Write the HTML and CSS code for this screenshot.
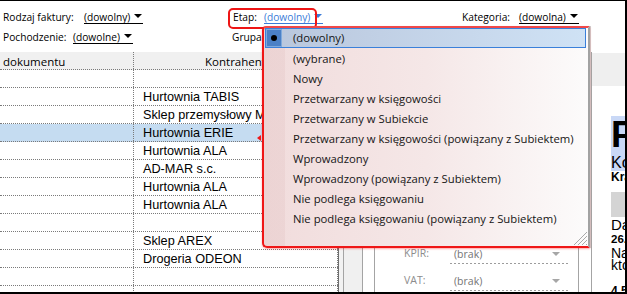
FILE: index.html
```html
<!DOCTYPE html>
<html lang="pl">
<head>
<meta charset="utf-8">
<title>Faktury</title>
<link rel="stylesheet" href="styles.css">
</head>
<body>
<div class="frame">
  <div class="filters">
    <div class="filter"><span class="lbl w-rodzaj">Rodzaj faktury:</span><span class="dd">(dowolny)<i class="tri"></i></span></div>
    <div class="filter etap"><span class="lbl w-etap">Etap:</span><span class="dd blue">(dowolny)<i class="tri"></i></span></div>
    <div class="filter"><span class="lbl w-kat">Kategoria:</span><span class="dd">(dowolna)<i class="tri"></i></span></div>
    <div class="filter"><span class="lbl w-poch">Pochodzenie:</span><span class="dd">(dowolne)<i class="tri"></i></span></div>
    <div class="filter grupa"><span class="lbl w-grupa">Grupa:</span></div>
  </div>
  <div class="main">
    <div class="grid">
      <div class="row head"><div class="c1">dokumentu</div><div class="c2 center">Kontrahent</div></div>
      <div class="row data"><div class="c1"></div><div class="c2"></div></div>
      <div class="row data"><div class="c1"></div><div class="c2">Hurtownia TABIS</div></div>
      <div class="row data"><div class="c1"></div><div class="c2">Sklep przemysłowy MEGA</div></div>
      <div class="row data sel"><div class="c1"></div><div class="c2">Hurtownia ERIE</div></div>
      <div class="row data"><div class="c1"></div><div class="c2">Hurtownia ALA</div></div>
      <div class="row data"><div class="c1"></div><div class="c2">AD-MAR s.c.</div></div>
      <div class="row data"><div class="c1"></div><div class="c2">Hurtownia ALA</div></div>
      <div class="row data"><div class="c1"></div><div class="c2">Hurtownia ALA</div></div>
      <div class="row data"><div class="c1"></div><div class="c2"></div></div>
      <div class="row data"><div class="c1"></div><div class="c2">Sklep AREX</div></div>
      <div class="row data"><div class="c1"></div><div class="c2">Drogeria ODEON</div></div>
      <div class="row data"><div class="c1"></div><div class="c2"></div></div>
      <div class="row data"><div class="c1"></div><div class="c2"></div></div>
    </div>
    <div class="s1"></div>
    <div class="s2"></div>
    <div class="s3"></div>
    <div class="form">
      <div class="frow"><span class="flbl">KPIR:</span><span class="fval">(brak)<i class="ftri"></i></span></div>
      <div class="frow"><span class="flbl">VAT:</span><span class="fval">(brak)<i class="ftri"></i></span></div>
    </div>
    <div class="s4"></div>
    <div class="right">
      <div class="rhead"></div>
      <div class="rbody">
        <div class="blk">
          <div class="big">FZ</div>
          <div class="ko">Kontrahent</div>
        </div>
        <div class="kr">Kraków</div>
        <div class="gbox"></div>
        <div class="da">Data</div>
        <div class="b26">26.05</div>
        <div class="na">Należność</div>
        <div class="kt">kto</div>
        <div class="four">4 500</div>
      </div>
    </div>
  </div>
  <div class="popup">
    <div class="mi sel"><span class="chk"></span>(dowolny)</div>
    <div class="mi">(wybrane)</div>
    <div class="mi">Nowy</div>
    <div class="mi">Przetwarzany w księgowości</div>
    <div class="mi">Przetwarzany w Subiekcie</div>
    <div class="mi">Przetwarzany w księgowości (powiązany z Subiektem)</div>
    <div class="mi">Wprowadzony</div>
    <div class="mi">Wprowadzony (powiązany z Subiektem)</div>
    <div class="mi">Nie podlega księgowaniu</div>
    <div class="mi">Nie podlega księgowaniu (powiązany z Subiektem)</div>
    <svg class="grip" width="14" height="14" viewBox="0 0 14 14">
      <path d="M14 1 L1 14 M14 5 L5 14 M14 9 L9 14 M14 13 L13 14" stroke="#a9a9a9" stroke-width="1" fill="none"/>
    </svg>
  </div>
</div>
</body>
</html>
```
FILE: styles.css
```css
html, body {
  margin: 0;
  padding: 0;
  background: #fff;
}
body {
  width: 627px;
  height: 294px;
  overflow: hidden;
}
.frame {
  position: relative;
  box-sizing: border-box;
  width: 627px;
  height: 294px;
  border-top: 1px solid #000;
  border-right: 2px solid #000;
  border-bottom: 2px solid #000;
  display: flex;
  flex-direction: column;
  font-family: "Open Sans", "Noto Sans", sans-serif;
  color: #000;
  overflow: hidden;
}

/* filters */
.filters {
  height: 51px;
  flex: none;
  box-sizing: border-box;
  padding: 6px 0 0 3px;
  display: grid;
  grid-template-columns: 230px 229px 1fr;
  grid-auto-rows: 20px;
  font-size: 10.2px;
}
.filter {
  display: flex;
  align-items: baseline;
  line-height: 20px;
  white-space: nowrap;
}
.lbl { display: inline-block; flex: none; }
.w-rodzaj { width: 81px; }
.w-poch { width: 70px; }
.w-etap { width: 31px; }
.w-kat { width: 57px; }
.w-grupa { width: 29px; }
.grupa { margin-left: -1px; }
.dd {
  display: inline-flex;
  line-height: 12px;
  border-bottom: 1px solid #000;
  padding-right: 1px;
}
.tri {
  align-self: flex-start;
  width: 0;
  height: 0;
  margin: 3px 0 0 4px;
  border-left: 4px solid transparent;
  border-right: 4px solid transparent;
  border-top: 4px solid currentColor;
}
.dd.blue {
  color: #3a7bd8;
  border-bottom-color: #3a7bd8;
}
.etap { position: relative; }
.etap::after {
  content: "";
  position: absolute;
  left: -5px;
  top: 1px;
  width: 89px;
  height: 21px;
  box-sizing: border-box;
  border: 2px solid #ee1515;
  border-radius: 5px;
}

/* main */
.main {
  flex: 1;
  display: flex;
  overflow: hidden;
}
.grid {
  flex: none;
  width: 339px;
  box-sizing: border-box;
  border-right: 1px solid #6e6e6e;
  overflow: hidden;
}
.row {
  display: flex;
  height: 18px;
  box-sizing: border-box;
  border-bottom: 1px dotted #7a7a7a;
}
.row.head {
  background: #f0f0f0;
  font-size: 11.5px;
  line-height: 19px;
}
.row.data {
  font-family: "Liberation Sans", Arial, sans-serif;
  font-size: 12.7px;
  line-height: 19px;
}
.row.sel { background: #c5dcf1; }
.c1, .c2 {
  box-sizing: border-box;
  border-right: 1px dotted #7a7a7a;
  overflow: hidden;
  white-space: nowrap;
}
.c1 { width: 134px; padding-left: 3px; }
.c2 { width: 204px; padding-left: 9px; }
.c2.center { text-align: center; padding-left: 0; }

.s1 { flex: none; width: 4px; background: #f2f2f2; }
.s2 { flex: none; width: 19px; box-sizing: border-box; border-left: 1px solid #a4a4a4; background: #f0f0f0; }
.s3 { flex: none; width: 12px; box-sizing: border-box; border-left: 1px solid #a4a4a4; }
.s4 { flex: none; width: 13px; box-sizing: border-box; border-left: 1px solid #a4a4a4; }

.form {
  flex: none;
  width: 204px;
  box-sizing: border-box;
  border-left: 1px solid #a4a4a4;
  padding-left: 29px;
  display: flex;
  flex-direction: column;
  justify-content: flex-end;
}
.frow {
  display: flex;
  align-items: flex-end;
  height: 27px;
  font-size: 10.5px;
  color: #8c8c8c;
  white-space: nowrap;
}
.flbl {
  width: 46px;
  line-height: 14px;
  padding-bottom: 4px;
  margin-bottom: 1px;
}
.fval {
  width: 118px;
  box-sizing: border-box;
  display: flex;
  align-items: center;
  line-height: 14px;
  padding: 0 0 3px 4px;
  margin-bottom: 1px;
  color: #747474;
  background-image: repeating-linear-gradient(90deg, #9c9c9c 0 2px, transparent 2px 4px);
  background-size: 100% 1px;
  background-position: left bottom;
  background-repeat: no-repeat;
}
.ftri {
  margin-left: auto;
  margin-right: 8px;
  width: 0;
  height: 0;
  border-left: 4px solid transparent;
  border-right: 4px solid transparent;
  border-top: 4px solid #a6a6a6;
}

/* right panel */
.right {
  flex: none;
  width: 34px;
  box-sizing: border-box;
  border-left: 1px solid #a4a4a4;
  overflow: hidden;
  font-family: "Liberation Sans", Arial, sans-serif;
  white-space: nowrap;
}
.rhead {
  margin-top: 1px;
  height: 33px;
  background: #efefef;
}
.rbody { padding-left: 19px; }
.blk {
  margin-top: 30px;
  height: 55px;
  background: #c9d8f6;
}
.big { font-size: 37px; font-weight: bold; line-height: 37px; }
.ko { font-size: 16px; line-height: 18px; padding-top: 1px; }
.kr { font-size: 12px; font-weight: bold; line-height: 12px; }
.gbox { margin-top: 9px; height: 25px; background: #d4d4d4; }
.da { font-size: 15px; line-height: 16px; }
.b26 { font-size: 11.5px; font-weight: bold; line-height: 13px; }
.na { font-size: 14px; line-height: 12px; margin-top: 1px; }
.kt { font-size: 14px; line-height: 12px; }
.four { margin-top: 13px; font-size: 12px; font-weight: bold; line-height: 14px; }

/* popup */
.popup {
  position: absolute;
  left: 262px;
  top: 25px;
  width: 328px;
  height: 222px;
  box-sizing: border-box;
  border: 2px solid #ef1717;
  border-top-color: #f04848;
  border-right-color: #a2a2a2;
  border-radius: 4px 0 0 5px;
  background:
    linear-gradient(90deg, rgba(200, 150, 150, 0.12) 0 21px, transparent 21px),
    linear-gradient(90deg, #f1dcdc 0%, #f5e7e7 50%, #fcfbfb 100%);
  box-shadow: 0 1px 2px rgba(255, 0, 0, 0.35), 1px 0 0 #d0d0d0;
  font-size: 11.3px;
  color: #151515;
}
.popup::before {
  content: "";
  position: absolute;
  left: -7px;
  top: 107px;
  width: 0;
  height: 0;
  border-top: 3px solid transparent;
  border-bottom: 3px solid transparent;
  border-right: 4px solid #ef1717;
}
.mi {
  display: flex;
  align-items: center;
  height: 20px;
  box-sizing: border-box;
  padding-left: 29px;
  white-space: nowrap;
}
.mi.sel {
  margin: 0 2px 0 1px;
  padding-left: 0;
  border: 1px solid #3a80da;
  background: linear-gradient(90deg, #b9c6dc, #cfe2f5);
  align-items: stretch;
  line-height: 18px;
}
.chk {
  position: relative;
  width: 16px;
  margin-right: 11px;
  box-sizing: border-box;
  background: #4b80c6;
  border: 1px solid #7fa9dc;
}
.chk::after {
  content: "";
  position: absolute;
  left: 4px;
  top: 5px;
  width: 6px;
  height: 6px;
  border-radius: 50%;
  background: #000;
}
.grip {
  position: absolute;
  right: 1px;
  bottom: 1px;
}
```
